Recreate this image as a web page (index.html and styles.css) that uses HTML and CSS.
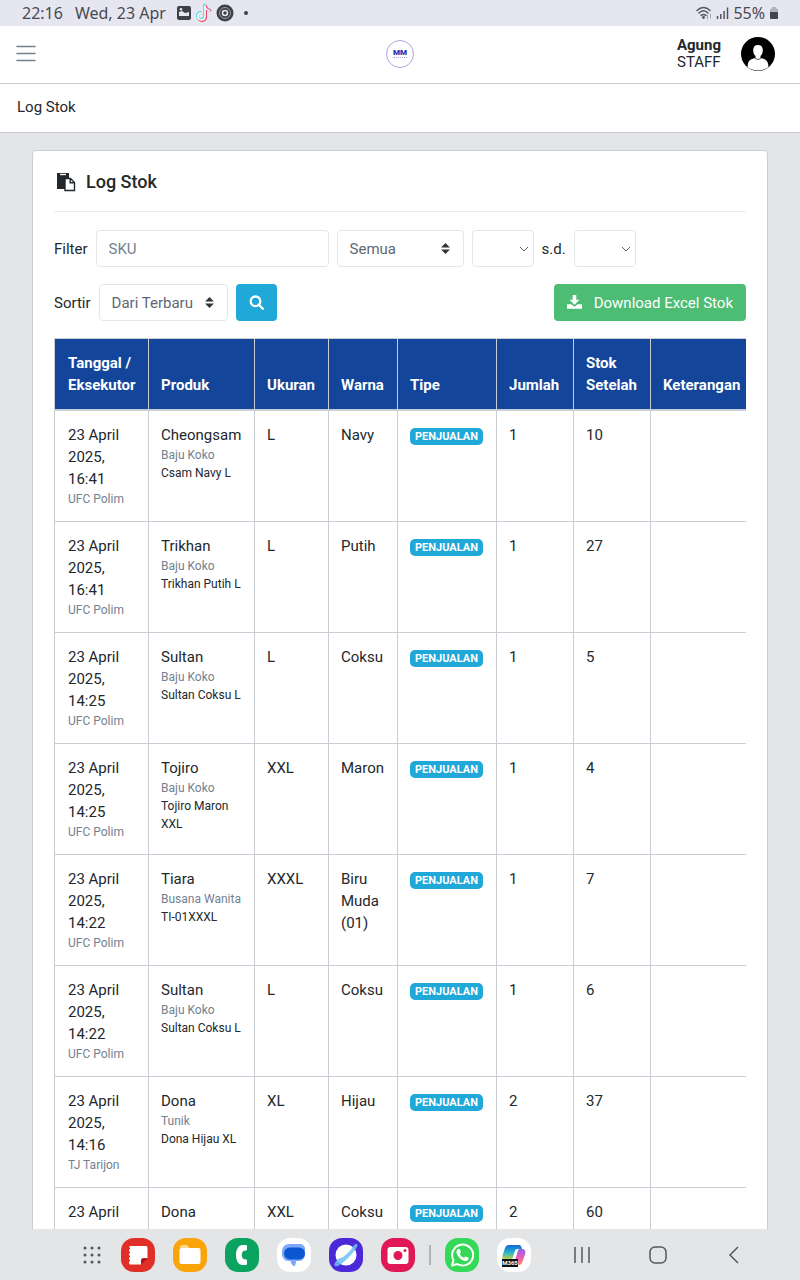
FILE: index.html
```html
<!DOCTYPE html>
<html lang="id">
<head>
<meta charset="utf-8">
<meta name="viewport" content="width=device-width, initial-scale=1">
<title>Log Stok</title>
<link rel="stylesheet" href="styles.css">
</head>
<body>
<div class="statusbar">
  <span class="clock">22:16</span>
  <span class="date">Wed, 23 Apr</span>
  <span class="notices">
    <svg width="16" height="16" viewBox="0 0 16 16"><rect x="1" y="1" width="14" height="14" rx="2" fill="#3f3f46"/><path d="M3 9V7l3-1 3 2 4-1v4H3z" fill="#e6e6f1"/><circle cx="5" cy="4.300" r="1.300" fill="#e6e6f1"/></svg>
    <svg width="18" height="20" viewBox="0 0 18 20" fill="none" stroke-linecap="round"><path d="M9.500 2v11a3.500 3.500 0 1 1-4-3.500M9.500 2c.5 3 2 4.500 5 5" stroke="#5fdfe3" stroke-width="3"/><path d="M11 3v11.500a4 4 0 0 1-7 2M11 3c.5 3 2 4 4.500 4.500" stroke="#ee4b6a" stroke-width="2"/><path d="M10 3v10.500a3.500 3.500 0 1 1-4-3.500M10 3c.5 3 2 4 4.500 4.500" stroke="#fff" stroke-width="1.500"/></svg>
    <svg width="18" height="18" viewBox="0 0 18 18" fill="none"><circle cx="9" cy="9" r="8.500" fill="#3f3f46"/><circle cx="9" cy="9" r="5.500" stroke="#9c9ca4"/><circle cx="9" cy="9" r="2.500" stroke="#e6e6f1" stroke-width="1.500"/></svg>
    <svg width="18" height="18" viewBox="0 0 18 18"><circle cx="9" cy="9" r="2" fill="#3f3f46"/></svg>
  </span>
  <span class="signals">
    <svg width="16" height="14" viewBox="0 0 16 14" fill="none" stroke="#55555d" stroke-width="1.500" stroke-linecap="round"><path d="M1 4.500c4-4 9-4 13 0M3 7c3-3 6-3 9 0M5 9.500c1.500-1.500 3.500-1.500 5 0"/><circle cx="7.500" cy="11.500" r=".7"/><path d="M11.500 9v4M14.500 8v4" stroke="#a6a6b0" stroke-width="1"/></svg>
    <svg width="13" height="14" viewBox="0 0 13 14" stroke="#55555d" stroke-width="1.500"><path d="M1.500 10v3M4.800 8v5M8.100 5v8M11.500 1.500V13"/></svg>
    <span>55%</span>
    <svg width="10" height="14" viewBox="0 0 10 14"><path d="M3 1h4v1.500h1a1 1 0 0 1 1 1V7H1V3.500a1 1 0 0 1 1-1h1z" fill="#b4b4bc"/><path d="M1 6h8v6a1 1 0 0 1-1 1H2a1 1 0 0 1-1-1z" fill="#44444c"/></svg>
  </span>
</div>

<div class="page">
  <header class="topbar">
    <button class="menu" type="button" aria-label="Menu"><svg width="20" height="17" viewBox="0 0 20 17" stroke="#73818f" stroke-width="1.600" stroke-linecap="round"><path d="M1 1.500h18M1 8.500h18M1 15.500h18"/></svg></button>
    <a class="brand" href="#" aria-label="MM"><span class="brand-name">MM</span><span class="brand-line"></span></a>
    <div class="user">
      <div class="user-text"><strong>Agung</strong><span>STAFF</span></div>
      <svg width="34" height="34" viewBox="0 0 34 34"><circle cx="17" cy="17" r="17" fill="#000"/><path d="M17 8c3.200 0 5 2.200 4.800 5.500-.1 2.500-.9 4.300-2.300 5.500v2c4 .6 7 2.500 7.500 5.500l.5 3.500C25 32 21.500 33.500 17 33.500S9 32 6.500 30l.5-3.500c.5-3 3.500-4.900 7.500-5.500v-2c-1.400-1.200-2.200-3-2.300-5.500C12 10.200 13.800 8 17 8z" fill="#fff"/><path d="M13.500 20.800c2 2 5 2 7 0" fill="none" stroke="#000" stroke-width=".7"/></svg>
    </div>
  </header>
  <nav class="breadcrumb">Log Stok</nav>

  <main class="main">
    <section class="card">
      <h1 class="title"><svg width="20" height="20" viewBox="0 0 20 20"><path d="M1 1h12v5H9v11H1z" fill="#23282c"/><path d="M4 2.500h6" stroke="#fff" stroke-width="1.300"/><path d="M9 6.500h5.500L18.500 10.500v8H9zM14.200 6.500v4.300h4.300" fill="#fff" stroke="#23282c" stroke-width="1.400"/></svg>Log Stok</h1>
      <form class="filters">
        <div class="row">
          <label for="sku">Filter</label>
          <input class="control sku" id="sku" type="text" placeholder="SKU">
          <select class="control sort-arrows all" aria-label="Tipe"><option>Semua</option></select>
          <select class="control chevron" id="from" aria-label="Dari tanggal"><option></option></select>
          <label for="to">s.d.</label>
          <select class="control chevron" id="to"><option></option></select>
        </div>
        <div class="row">
          <label for="sort">Sortir</label>
          <select class="control sort-arrows order" id="sort"><option>Dari Terbaru</option></select>
          <button class="btn search" type="submit" aria-label="Cari"><svg width="15" height="15" viewBox="0 0 15 15" fill="none" stroke="#fff" stroke-width="2.300"><circle cx="6.500" cy="6.300" r="4.800"/><path d="M9.800 9.800l4 4" stroke-linecap="round"/></svg></button>
          <button class="btn download" type="button"><svg width="15" height="15" viewBox="0 0 15 15" fill="#fff"><path d="M5.700 0h3.600v4.700h3.200L7.500 9.800 2.500 4.700h3.200z"/><path d="M0 9.200h4.200l3.300 2.600 3.300-2.600H15v4.600H0z"/></svg>Download Excel Stok</button>
        </div>
      </form>
      <div class="table-wrap">
        <table class="stock">
          <colgroup><col class="c-date"><col class="c-product"><col class="c-size"><col class="c-color"><col class="c-type"><col class="c-count"><col class="c-after"><col class="c-note"></colgroup>
          <thead><tr><th>Tanggal / Eksekutor</th><th>Produk</th><th>Ukuran</th><th>Warna</th><th>Tipe</th><th>Jumlah</th><th>Stok Setelah</th><th>Keterangan</th></tr></thead>
          <tbody>
            <tr><td>23 April 2025, 16:41<small class="muted">UFC Polim</small></td><td>Cheongsam<small class="muted">Baju Koko</small><small>Csam Navy L</small></td><td>L</td><td>Navy</td><td><span class="badge">PENJUALAN</span></td><td>1</td><td>10</td><td></td></tr>
            <tr><td>23 April 2025, 16:41<small class="muted">UFC Polim</small></td><td>Trikhan<small class="muted">Baju Koko</small><small>Trikhan Putih L</small></td><td>L</td><td>Putih</td><td><span class="badge">PENJUALAN</span></td><td>1</td><td>27</td><td></td></tr>
            <tr><td>23 April 2025, 14:25<small class="muted">UFC Polim</small></td><td>Sultan<small class="muted">Baju Koko</small><small>Sultan Coksu L</small></td><td>L</td><td>Coksu</td><td><span class="badge">PENJUALAN</span></td><td>1</td><td>5</td><td></td></tr>
            <tr><td>23 April 2025, 14:25<small class="muted">UFC Polim</small></td><td>Tojiro<small class="muted">Baju Koko</small><small>Tojiro Maron XXL</small></td><td>XXL</td><td>Maron</td><td><span class="badge">PENJUALAN</span></td><td>1</td><td>4</td><td></td></tr>
            <tr><td>23 April 2025, 14:22<small class="muted">UFC Polim</small></td><td>Tiara<small class="muted">Busana Wanita</small><small>TI-01XXXL</small></td><td>XXXL</td><td>Biru Muda (01)</td><td><span class="badge">PENJUALAN</span></td><td>1</td><td>7</td><td></td></tr>
            <tr><td>23 April 2025, 14:22<small class="muted">UFC Polim</small></td><td>Sultan<small class="muted">Baju Koko</small><small>Sultan Coksu L</small></td><td>L</td><td>Coksu</td><td><span class="badge">PENJUALAN</span></td><td>1</td><td>6</td><td></td></tr>
            <tr><td>23 April 2025, 14:16<small class="muted">TJ Tarijon</small></td><td>Dona<small class="muted">Tunik</small><small>Dona Hijau XL</small></td><td>XL</td><td>Hijau</td><td><span class="badge">PENJUALAN</span></td><td>2</td><td>37</td><td></td></tr>
            <tr><td>23 April</td><td>Dona</td><td>XXL</td><td>Coksu</td><td><span class="badge">PENJUALAN</span></td><td>2</td><td>60</td><td></td></tr>
          </tbody>
        </table>
      </div>
    </section>
  </main>
</div>

<footer class="dock">
  <div class="apps">
    <svg width="20" height="20" viewBox="0 0 20 20" fill="#55575c"><circle cx="2" cy="3" r="1.500"/><circle cx="9" cy="3" r="1.500"/><circle cx="16" cy="3" r="1.500"/><circle cx="2" cy="10" r="1.500"/><circle cx="9" cy="10" r="1.500"/><circle cx="16" cy="10" r="1.500"/><circle cx="2" cy="17" r="1.500"/><circle cx="9" cy="17" r="1.500"/><circle cx="16" cy="17" r="1.500"/></svg>
    <svg width="34" height="34" viewBox="0 0 34 34"><rect width="34" height="34" rx="13" fill="#df2f27"/><path d="M9.500 8H25a1.500 1.500 0 0 1 1.500 1.500V20h-4a2.500 2.500 0 0 0-2.500 2.500v4H9.500A1.500 1.500 0 0 1 8 25V9.500A1.500 1.500 0 0 1 9.500 8z" fill="#fff"/><path d="M20 26.500v-3.500a2.500 2.500 0 0 1 2.500-2.500h4z" fill="#a51220"/><path d="M8 9.500v16" stroke="#df2f27" stroke-width="2" stroke-dasharray="2 2"/></svg>
    <svg width="34" height="34" viewBox="0 0 34 34"><rect width="34" height="34" rx="13" fill="#f9a50a"/><path d="M7 9a2 2 0 0 1 2-2h5l2.500 3H7z" fill="#ffd68a"/><path d="M8.500 10h17a2 2 0 0 1 2 2v12a2 2 0 0 1-2 2h-17a2 2 0 0 1-2-2V12a2 2 0 0 1 2-2z" fill="#fff"/></svg>
    <svg width="34" height="34" viewBox="0 0 34 34"><rect width="34" height="34" rx="13" fill="#0ba360"/><path d="M21 7h-3C13 7 11 12 11 17s2 10 7 10h3a1 1 0 0 0 1-1v-3.500a1 1 0 0 0-.8-1l-3-.5c-2-2.500-2-5.500 0-8l3-.5a1 1 0 0 0 .8-1V8a1 1 0 0 0-1-1z" fill="#fff"/></svg>
    <svg width="34" height="34" viewBox="0 0 34 34"><rect width="34" height="34" rx="13" fill="#fff"/><path d="M12 6h11a5 5 0 0 1 5 5v6a6 6 0 0 1-6 6h-3c0 2-.5 4-1.500 5.500C15 27.500 14 25.500 13.500 23H12a6.500 6.500 0 0 1-7-6v-4a7 7 0 0 1 7-7z" fill="#7fa8f6"/><path d="M13 9.500h9a6 6 0 0 1 0 12h-9a6 6 0 0 1 0-12z" fill="#0b57d0"/></svg>
    <svg width="34" height="34" viewBox="0 0 34 34"><rect width="34" height="34" rx="13" fill="#4b28d8"/><circle cx="17" cy="17" r="10.500" fill="#fff"/><path d="M28 6c2 2-3 8-9 14S8 29.500 6 28s1-5 3-7l5-2c4-3 8-7 9.500-10C25 7 27 5 28 6z" fill="#70bff5" fill-opacity=".85"/></svg>
    <svg width="34" height="34" viewBox="0 0 34 34"><rect width="34" height="34" rx="13" fill="#e01855"/><rect x="6.500" y="9" width="21" height="17" rx="3" fill="#fff"/><circle cx="17" cy="17.500" r="4.500" fill="#e01855"/><circle cx="24" cy="12.500" r="1.500" fill="#e01855"/></svg>
  </div>
  <span class="divider"></span>
  <div class="apps">
    <svg width="34" height="34" viewBox="0 0 34 34"><rect width="34" height="34" rx="13" fill="#33d957"/><path d="M7 27.500l1.500-5.300A10.500 10.500 0 1 1 12.200 26z" fill="none" stroke="#fff" stroke-width="2" stroke-linejoin="round"/><path d="M12.500 11.500c1-1 2-.8 2.500.3l.8 2c.3.7-.8 1.500-1 2.200.8 1.600 2.200 3 4 3.800.8-.3 1.300-1.600 2-1.400l2.300 1.100c1.200.6-.1 3-1.800 3.500-4 .8-11-6-9.700-10 .2-.6.500-1.100.9-1.500z" fill="#fff"/></svg>
    <svg width="34" height="34" viewBox="0 0 34 34"><defs><linearGradient id="ca" x2="0" y2="1"><stop stop-color="#1467d2"/><stop offset=".5" stop-color="#27b4cc"/><stop offset="1" stop-color="#d6d640"/></linearGradient><linearGradient id="cb" x2="0" y2="1"><stop stop-color="#8b62e8"/><stop offset=".55" stop-color="#ea60b6"/><stop offset="1" stop-color="#ff8b55"/></linearGradient></defs><rect width="34" height="34" rx="13" fill="#fff"/><path d="M12 7h10c2 0 2.500 2 3 4h-4c-2 0-3 1-3.500 3L15 22H8c-3 0-3-3-2-6l2-6c.7-2 2-3 4-3z" fill="url(#ca)"/><path d="M23 11h2c3 0 4 2.500 3 5.500l-2 6c-.8 2.500-2 4.500-4.500 4.500H14c2 0 3-1 3.500-3l3-10c.5-2 1-3 2.500-3z" fill="url(#cb)"/><rect x="5" y="21" width="16" height="8" fill="#111"/><text class="app-tag" x="13" y="27" text-anchor="middle">M365</text></svg>
  </div>
  <div class="nav">
    <button type="button" aria-label="Aplikasi terbaru"><svg width="24" height="24" viewBox="0 0 24 24"><path d="M5 4v16M12 4v16M19 4v16"/></svg></button>
    <button type="button" aria-label="Beranda"><svg width="24" height="24" viewBox="0 0 24 24"><rect x="4" y="4" width="16" height="16" rx="5"/></svg></button>
    <button type="button" aria-label="Kembali"><svg width="24" height="24" viewBox="0 0 24 24"><path d="M16 4l-8 8 8 8"/></svg></button>
  </div>
</footer>
</body>
</html>
```
FILE: styles.css
```css
* { box-sizing: border-box; }
body {
  margin: 0;
  height: 100vh;
  display: flex;
  flex-direction: column;
  overflow: hidden;
  background: #e4e5e7;
  color: #23282c;
  font: 15px/22px Roboto, "Liberation Sans", sans-serif;
}
svg { display: block; flex: none; }
button { font: inherit; border: 0; background: none; padding: 0; cursor: pointer; }

.statusbar {
  flex: none;
  display: flex;
  align-items: center;
  height: 26px;
  padding: 0 21px 0 22px;
  background: #e6e6f1;
  color: #4a4a52;
  font: 16px/26px "Noto Sans", Roboto, sans-serif;
}
.date { margin-left: 12px; }
.notices { display: flex; align-items: center; gap: 3px; margin-left: 10px; }
.signals { display: flex; align-items: center; gap: 4px; margin-left: auto; }

.page { flex: 1; min-height: 0; overflow: auto; scrollbar-width: none; }

.topbar {
  display: grid;
  grid-template-columns: 1fr auto 1fr;
  align-items: center;
  height: 58px;
  padding: 0 25px 2px 16px;
  background: #fff;
  border-bottom: 1px solid #c8ced3;
}
.menu { justify-self: start; }
.brand {
  display: flex;
  flex-direction: column;
  align-items: center;
  justify-content: center;
  width: 28px;
  height: 28px;
  margin-left: 9px;
  border: 1px solid #a9a6dc;
  border-radius: 50%;
  color: #2c2cb4;
  text-decoration: none;
}
.brand-name { font: 900 8px/8px Roboto, sans-serif; }
.brand-line { width: 14px; border-top: 1px dotted #a9a6dc; }
.user { display: flex; align-items: center; gap: 20px; justify-self: end; }
.user-text { display: flex; flex-direction: column; line-height: 17px; }

.breadcrumb { padding: 12px 17px 14px; background: #fff; border-bottom: 1px solid #c8ced3; }

.main { padding: 17px 32px; }
.card { padding: 20px 21px; background: #fff; border: 1px solid #c8ced3; border-radius: 4px; }
.title {
  display: flex;
  align-items: center;
  gap: 10px;
  margin: 0 0 18px;
  padding: 0 0 19px 2px;
  border-bottom: 1px solid #e8eaec;
  font-size: 18px;
  font-weight: 500;
  line-height: 21px;
}

.filters { display: flex; flex-direction: column; gap: 17px; margin-bottom: 17px; }
.row { display: flex; align-items: center; gap: 8px; }
.control {
  height: 37px;
  padding: 0 12px;
  border: 1px solid #e4e7ea;
  border-radius: 4px;
  background-color: #fff;
  color: #5c6873;
  font: inherit;
  appearance: none;
}
.control::placeholder { color: #73818f; opacity: 1; }
.sku { flex: 0 1 233px; min-width: 0; }
.all { width: 127px; }
.order { width: 129px; }
.sort-arrows {
  background: url("data:image/svg+xml,%3Csvg xmlns='http://www.w3.org/2000/svg' viewBox='0 0 4 5'%3E%3Cpath fill='%232f353a' d='M2 0L0 2h4zm0 5L0 3h4z'/%3E%3C/svg%3E") no-repeat right 13px center / 9px 11px;
}
.chevron {
  width: 62px;
  background: url("data:image/svg+xml,%3Csvg xmlns='http://www.w3.org/2000/svg' viewBox='0 0 10 6'%3E%3Cpath fill='none' stroke='%235c6066' d='M1 1l4 4 4-4'/%3E%3C/svg%3E") no-repeat right 4px center / 10px 6px;
}
.btn {
  display: flex;
  align-items: center;
  justify-content: center;
  height: 37px;
  border-radius: 4px;
  color: #fff;
}
.search { width: 41px; background: #20a8d8; }
.download { gap: 12px; margin-left: auto; padding: 0 13px; background: #4dbd74; }

.table-wrap { overflow-x: auto; scrollbar-width: none; }
.stock { width: 700px; min-width: 100%; border-collapse: collapse; table-layout: fixed; }
.c-date { width: 94px; }
.c-product { width: 106px; }
.c-size { width: 74px; }
.c-color { width: 69px; }
.c-type { width: 99px; }
.c-count { width: 77px; }
.c-after { width: 77px; }
.c-note { width: 104px; }
.stock th, .stock td { padding: 13px 12px; border: 1px solid #c8ced3; text-align: left; vertical-align: top; }
.stock th {
  border-bottom-width: 2px;
  background: #13459a;
  color: #fff;
  font-weight: 700;
  vertical-align: bottom;
}
.stock th:first-child, .stock td:first-child { padding-left: 13px; }
.stock small { display: block; font-size: 12px; line-height: 18px; }
.stock .muted { color: #73818f; }
.badge {
  display: inline-block;
  padding: 3px 5px;
  border-radius: 5px;
  background: #20a8d8;
  color: #fff;
  font-size: 11px;
  font-weight: 700;
  line-height: 11px;
}

.dock {
  flex: none;
  display: flex;
  align-items: center;
  height: 51px;
  padding: 0 54px 0 83px;
  background: #e4e5e7;
}
.apps { display: flex; align-items: center; gap: 18px; }
.divider { width: 2px; height: 20px; margin: 0 14px; background: #b2b3b6; }
.app-tag { fill: #fff; font: 700 6px Roboto, sans-serif; }
.nav { display: flex; gap: 52px; margin-left: auto; }
.nav svg { fill: none; stroke: #55575c; stroke-width: 1.5; }
```
